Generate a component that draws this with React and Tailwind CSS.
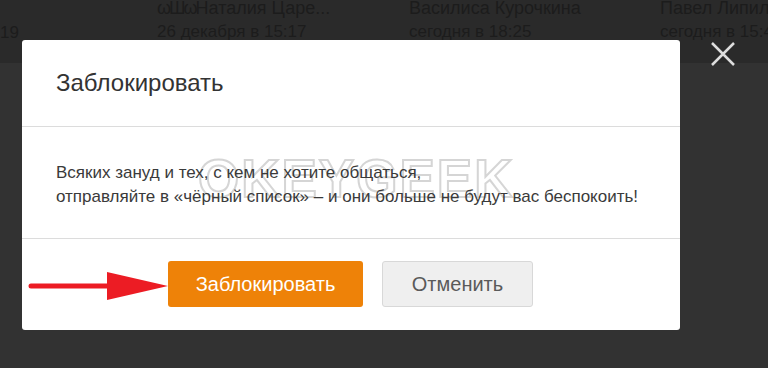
const TOP_USERS = [
  { name: 'Наталия Царе...', time: '26 декабря в 15:17', x: 'w-[252px]', crown: true },
  { name: 'Василиса Курочкина', time: 'сегодня в 18:25', x: 'w-[251px]' },
  { name: 'Павел Липил', time: 'сегодня в 15:4', x: 'w-[120px]' },
];

function RedArrow() {
  return (
    <svg width="142" height="34" viewBox="0 0 142 34" className="absolute left-[27px] top-[269px]">
      <line x1="4" y1="17" x2="84" y2="17" stroke="#ec1c24" strokeWidth="5" strokeLinecap="round" />
      <polygon points="80,3 141,17 80,31" fill="#ec1c24" />
    </svg>
  );
}

export default function App() {
  return (
    <div className="relative w-[768px] h-[368px] overflow-hidden font-['Liberation_Sans',Arial,sans-serif]">
      <div className="h-[63px] bg-[#2a2a2a] flex text-[#1c1c1c]">
        <div className="w-[157px] shrink-0 flex flex-col">
          <span className="h-[21px]"></span>
          <span className="h-[21px] text-[17px] mt-[-1px]">19</span>
        </div>
        {TOP_USERS.map((u, i) => (
          <div key={i} className={`${u.x} shrink-0 flex flex-col`}>
            <span className="mt-[-5px] h-[24px] text-[18px] whitespace-nowrap">
              {u.crown && <span className="tracking-[-2px]">ωШω</span>}
              {u.name}
            </span>
            <span className="h-[21px] text-[17px] whitespace-nowrap">{u.time}</span>
          </div>
        ))}
      </div>
      <div className="h-[305px] bg-[#323232]"></div>

      <div className="absolute left-[22px] top-[40px] w-[658px] h-[290px] bg-white rounded-[3px] flex flex-col">
        <div className="h-[87px] border-b border-[#dcdcdc] flex items-center pl-[34px]">
          <h2 className="text-[24px] text-[#333]">Заблокировать</h2>
        </div>
        <div className="relative h-[112px] border-b border-[#dcdcdc] pl-[34px] pt-[34px] text-[17px] leading-[24px] text-[#3a3a3a]">
          <span className="absolute left-[176px] top-[40px] text-[53px] font-bold tracking-[2px] text-transparent [-webkit-text-stroke:2px_rgba(185,185,185,0.6)]">
            OKEYGEEK
          </span>
          <p className="relative">Всяких зануд и тех, с кем не хотите общаться,</p>
          <p className="relative">отправляйте в «чёрный список» – и они больше не будут вас беспокоить!</p>
        </div>
        <div className="flex-1 flex items-center pl-[146px] gap-[19px] pb-[2px]">
          <button className="w-[195px] h-[46px] rounded-[3px] bg-[#ee8208] text-white text-[20px]">
            Заблокировать
          </button>
          <button className="w-[151px] h-[46px] rounded-[3px] bg-[#efefef] border border-[#d8d8d8] text-[#5a5a5a] text-[20px]">
            Отменить
          </button>
        </div>
      </div>

      <svg width="30" height="30" viewBox="0 0 30 30" className="absolute left-[708px] top-[39px]">
        <path d="M4 4 L26 26 M26 4 L4 26" stroke="#dedede" strokeWidth="2.5" />
      </svg>

      <RedArrow />
    </div>
  );
}
